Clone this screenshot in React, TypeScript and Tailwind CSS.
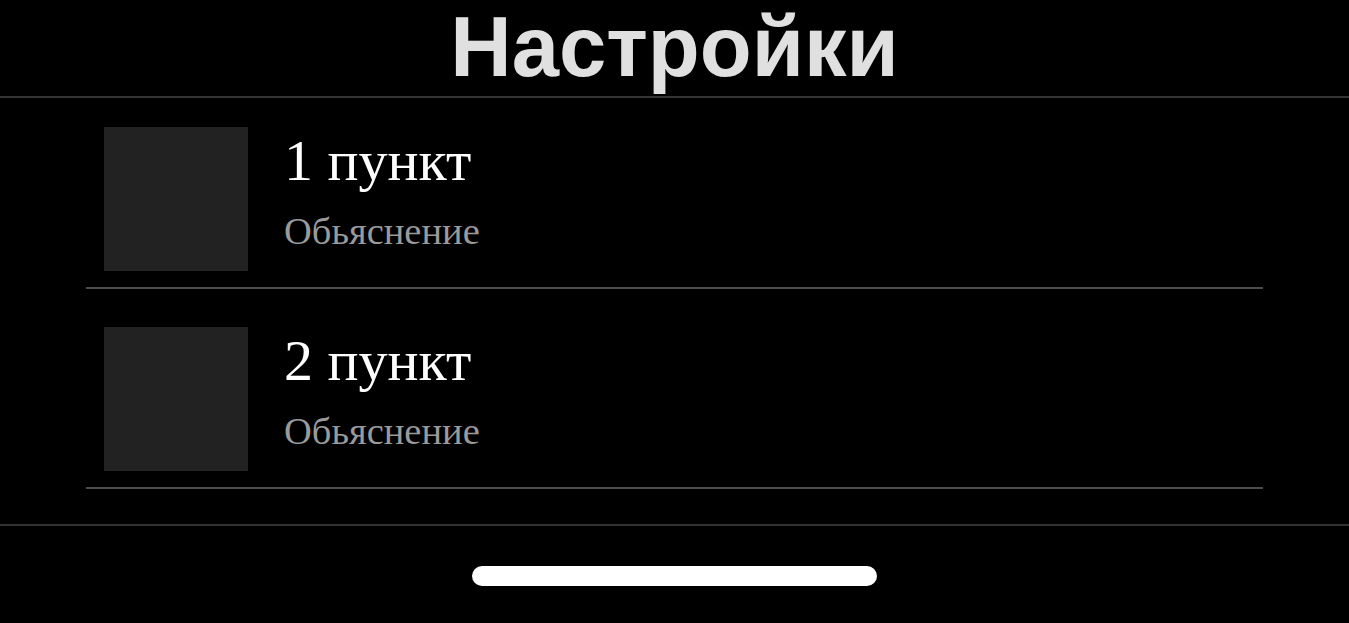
const items = [
  { title: "1 пункт", note: "Обьяснение" },
  { title: "2 пункт", note: "Обьяснение" },
];

function SettingsItem({ title, note }: { title: string; note: string }) {
  return (
    <div className="flex items-start gap-9 pl-[18px] pt-[38px] pb-4 first:pt-[29px] border-b-2 border-[#4d4d4d]">
      <div className="w-[144px] h-[144px] shrink-0 bg-[#222222]"></div>
      <div className="flex flex-col">
        <h2 className="text-[58px] leading-[66px] text-white font-['Liberation_Serif',serif] mt-[1px]">
          {title}
        </h2>
        <p className="text-[38.5px] leading-[42px] text-[#9a9a9a] font-['Liberation_Serif',serif] mt-[16px]">
          {note}
        </p>
      </div>
    </div>
  );
}

export default function App() {
  return (
    <div className="h-screen w-full bg-black flex flex-col overflow-hidden">
      {/* Header */}
      <header className="h-[98px] shrink-0 border-b-2 border-[#333333] flex justify-center">
        <h1 className="text-[85px] leading-[94px] font-bold text-[#e0e0e0] font-['Liberation_Sans',Arial,sans-serif]">
          Настройки
        </h1>
      </header>

      {/* List */}
      <main className="flex-1 px-[86px] pb-[35px]">
        {items.map((item) => (
          <SettingsItem key={item.title} title={item.title} note={item.note} />
        ))}
      </main>

      {/* Footer */}
      <footer className="h-[99px] shrink-0 border-t-2 border-[#333333] flex justify-center pt-[40px]">
        <div className="w-[405px] h-[20px] rounded-full bg-white"></div>
      </footer>
    </div>
  );
}
